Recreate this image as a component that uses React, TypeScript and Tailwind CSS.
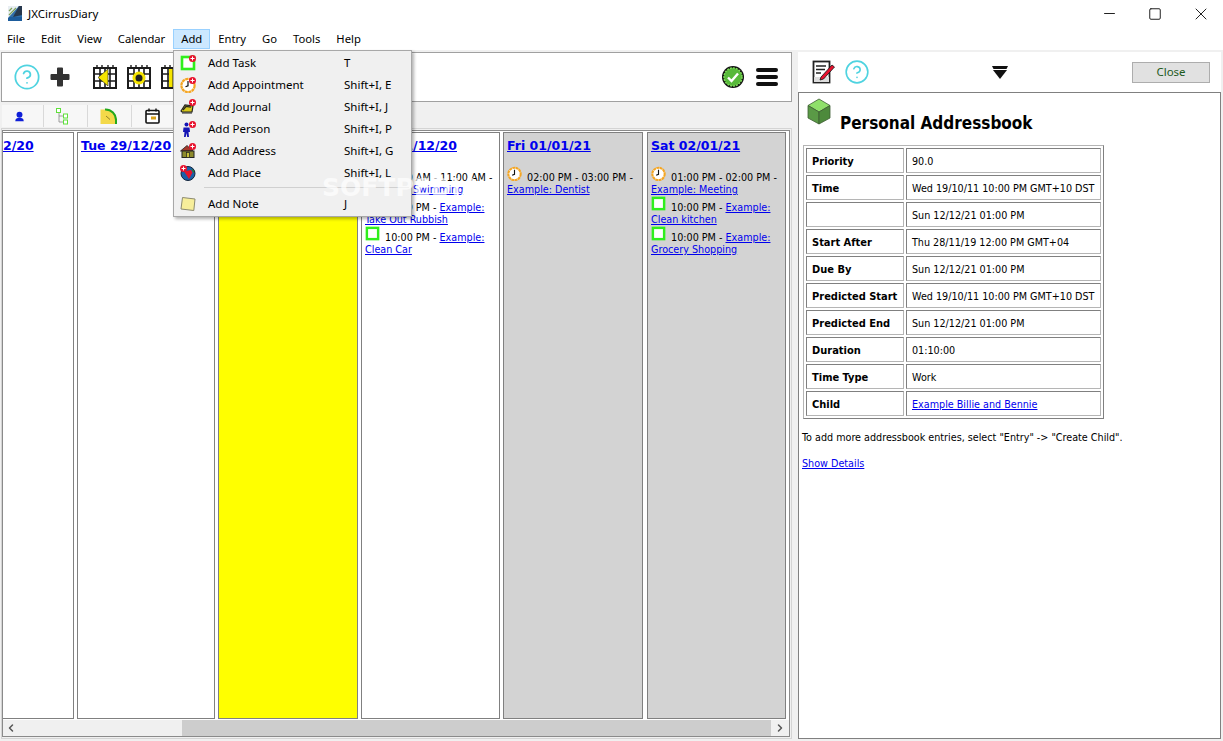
import { ChevronLeft, ChevronRight, CircleHelp, Minus, Square, X } from 'lucide-react';

const menus = ['File', 'Edit', 'View', 'Calendar', 'Add', 'Entry', 'Go', 'Tools', 'Help'];

const details = [
  ['Priority', '90.0'],
  ['Time', 'Wed 19/10/11 10:00 PM GMT+10 DST'],
  ['', 'Sun 12/12/21 01:00 PM'],
  ['Start After', 'Thu 28/11/19 12:00 PM GMT+04'],
  ['Due By', 'Sun 12/12/21 01:00 PM'],
  ['Predicted Start', 'Wed 19/10/11 10:00 PM GMT+10 DST'],
  ['Predicted End', 'Sun 12/12/21 01:00 PM'],
  ['Duration', '01:10:00'],
  ['Time Type', 'Work'],
];

function RedPlus() {
  return (
    <>
      <circle cx="12.5" cy="3.5" r="3.5" fill="#e8112d" />
      <path d="M12.5 1.5v4M10.5 3.5h4" stroke="#fff" strokeWidth="1" />
    </>
  );
}

function TaskIcon({ plus, size = 16 }: { plus?: boolean; size?: number }) {
  return (
    <svg width={size} height={size} viewBox="0 0 16 16" className="shrink-0">
      <rect x="2" y="2" width="12" height="12" fill="#fff" stroke="#2fef1c" strokeWidth="2.6" />
      {plus && <RedPlus />}
    </svg>
  );
}

function ClockIcon({ plus, size = 16 }: { plus?: boolean; size?: number }) {
  return (
    <svg width={size} height={size} viewBox="0 0 16 16" className="shrink-0">
      <circle cx="8" cy="8.5" r="6.6" fill="#fff" stroke="#f5a623" strokeWidth="2.2" strokeDasharray="3 0.5" />
      <path d="M8 4v4.800l-2.500 1" fill="none" stroke="#111" strokeWidth="1.2" />
      {plus && <RedPlus />}
    </svg>
  );
}

function JournalIcon() {
  return (
    <svg width="16" height="16" viewBox="0 0 16 16">
      <path d="M1 12 5 6l8 1-1 6H2z" fill="#d6c81c" stroke="#222" strokeWidth="1.2" />
      <path d="M3 11 6 7.500l5 .6M2 14h10" fill="none" stroke="#222" strokeWidth="1.2" />
      <RedPlus />
    </svg>
  );
}

function PersonIcon() {
  return (
    <svg width="16" height="16" viewBox="0 0 16 16">
      <circle cx="6.500" cy="3.500" r="2" fill="#1414b4" />
      <path d="M3.500 6.500h6L10 11H8.500l.5 5H7.200L6.500 12l-.8 4H4l.5-5H3z" fill="#1414b4" />
      <RedPlus />
    </svg>
  );
}

function AddressIcon() {
  return (
    <svg width="16" height="16" viewBox="0 0 16 16">
      <path d="M0.500 8 7 2.500 13 8z" fill="#a3392a" stroke="#222" strokeWidth="0.8" />
      <rect x="2" y="8" width="12" height="6.500" fill="#8d8a2c" stroke="#222" strokeWidth="1" />
      <rect x="6.500" y="9.500" width="3" height="5" fill="#c9c23a" stroke="#222" strokeWidth="0.7" />
      <RedPlus />
    </svg>
  );
}

function PlaceIcon() {
  return (
    <svg width="16" height="16" viewBox="0 0 16 16">
      <circle cx="8" cy="8.500" r="7" fill="#1b5fa8" stroke="#12233a" strokeWidth="1" />
      <path d="M4 6.500 11 5l1.500 2.500L9 14 6.500 10z" fill="#e5142a" />
      <path d="M11 3.500l3 2v3z" fill="#2a7d2a" />
      <circle cx="3.500" cy="3.500" r="3.500" fill="#e8112d" />
      <path d="M3.500 1.500v4M1.500 3.500h4" stroke="#fff" strokeWidth="1" />
    </svg>
  );
}

function NoteIcon() {
  return (
    <svg width="16" height="16" viewBox="0 0 16 16">
      <path d="M2.500 1.500 15 3l-1.200 11.500L1 13z" fill="#f7ee9a" stroke="#8c8a70" strokeWidth="1" />
    </svg>
  );
}

function CalendarIcon({ children }: { children: React.ReactNode }) {
  return (
    <svg width="24" height="24" viewBox="0 0 24 24" className="shrink-0">
      <rect x="1" y="3" width="22" height="20" fill="#fff" stroke="#1c1c1c" strokeWidth="2" />
      <path d="M1 9h22M1 16h22M7 3v20M12 3v20M17 3v20" stroke="#1c1c1c" strokeWidth="1.6" />
      <path d="M4 0v4M9 0v4M15 0v4M20 0v4" stroke="#1c1c1c" strokeWidth="1.4" />
      {children}
    </svg>
  );
}

function PlusIcon() {
  return (
    <svg width="22" height="22" viewBox="0 0 22 22">
      <path d="M8 2.500a1 1 0 0 1 1-1h4a1 1 0 0 1 1 1V8h5.500a1 1 0 0 1 1 1v4a1 1 0 0 1-1 1H14v5.500a1 1 0 0 1-1 1H9a1 1 0 0 1-1-1V14H2.500a1 1 0 0 1-1-1V9a1 1 0 0 1 1-1H8z" fill="#333" />
    </svg>
  );
}

function StatusIcon() {
  return (
    <svg width="24" height="24" viewBox="0 0 24 24">
      <circle cx="12" cy="12" r="11" fill="#111" />
      <circle cx="12" cy="12" r="9" fill="#57b93a" stroke="#7ddc57" strokeWidth="1.500" strokeDasharray="2 1" />
      <path d="m7 12.500 3.500 3.500L17 8.500" fill="none" stroke="#fff" strokeWidth="2.400" />
    </svg>
  );
}

function Hamburger() {
  return (
    <div className="flex flex-col gap-[3px] w-[22px]">
      <div className="h-[4px] rounded-sm bg-[#111]" />
      <div className="h-[4px] rounded-sm bg-[#111]" />
      <div className="h-[4px] rounded-sm bg-[#111]" />
    </div>
  );
}

function AppLogo() {
  return (
    <svg width="14" height="15" viewBox="0 0 14 15">
      <rect width="14" height="15" fill="#2f6ea8" />
      <rect y="11" width="14" height="4" fill="#1d5c9c" />
      <path d="M0 12 11 0H0z" fill="#e8eef2" />
      <path d="M1 9 8 2M1 5l3-3" stroke="#7fa15a" strokeWidth="1.200" />
      <path d="M11 0h3v9l-9 2z" fill="#27384d" />
    </svg>
  );
}

function EventLink({ children }: { children: React.ReactNode }) {
  return <a className="text-[#0000ee] underline">{children}</a>;
}

function Entry({ icon, time, title }: { icon: React.ReactNode; time: string; title: string }) {
  return (
    <div className="leading-[12px]">
      <span className="inline-block mr-[2px]">{icon}</span> {time} - <EventLink>{title}</EventLink>
    </div>
  );
}

function DayColumn({ date, className, children }: { date: string; className: string; children?: React.ReactNode }) {
  return (
    <div className={`shrink-0 h-full border border-[#808080] pl-[3px] pr-[2px] pt-[3px] font-['DejaVu_Sans_Condensed','DejaVu_Sans',sans-serif] text-[10.7px] text-black ${className}`}>
      <a className="block font-['DejaVu_Sans',sans-serif] font-bold text-[12.5px] leading-[19px] text-[#0000ee] underline whitespace-nowrap mb-[11px]">{date}</a>
      {children}
    </div>
  );
}

export default function App() {
  return (
    <div className="relative w-[1223px] h-[741px] overflow-hidden bg-[#f0f0f0] flex flex-col font-['Noto_Sans',sans-serif] text-[11.5px] text-black">
      <div className="h-[28px] shrink-0 bg-white flex items-center pl-[8px] pb-[1px]">
        <AppLogo />
        <span className="ml-[6px]">JXCirrusDiary</span>
        <div className="ml-auto flex items-center text-[#222]">
          <div className="w-[46px] flex justify-center"><Minus size={17} absoluteStrokeWidth strokeWidth={1} /></div>
          <div className="w-[46px] flex justify-center"><Square size={14} absoluteStrokeWidth strokeWidth={1} /></div>
          <div className="w-[46px] mr-[-1px] flex justify-center"><X size={20} absoluteStrokeWidth strokeWidth={1} /></div>
        </div>
      </div>

      <div className="h-[22px] shrink-0 bg-white flex py-[1px] text-[11.25px]">
        {menus.map((m) => (
          <div
            key={m}
            className={m === 'Add' ? 'px-[7px] flex items-center bg-[#cce8ff] border border-[#99d1ff]' : 'px-[7px] flex items-center border border-transparent first:pl-[6px]'}
          >
            {m}
          </div>
        ))}
      </div>

      <div className="flex-1 flex min-h-0 pt-[2px] pl-[1px] pb-[2px] pr-[2px]">
        <div className="w-[791px] shrink-0 flex flex-col">
          <div className="h-[50px] shrink-0 bg-white border border-[#a0a0a0] flex items-center pl-[11px] pr-[13px]">
            <CircleHelp size={28} strokeWidth={1.5} className="text-[#4fd3e0]" />
            <div className="ml-[8px]"><PlusIcon /></div>
            <div className="ml-[22px] flex gap-[10px]">
              <CalendarIcon><path d="M15 4v17L5 12.500z" fill="#f5e400" stroke="#222" strokeWidth="0.6" /></CalendarIcon>
              <CalendarIcon>
                <circle cx="12" cy="13" r="5" fill="#222" stroke="#f5e400" strokeWidth="3" />
              </CalendarIcon>
              <CalendarIcon><rect x="8" y="4" width="9" height="18" fill="#f5e400" /><path d="M12 4v18" stroke="#222" /></CalendarIcon>
            </div>
            <div className="ml-auto flex items-center gap-[11px]">
              <StatusIcon />
              <Hamburger />
            </div>
          </div>

          <div className="h-[22px] mt-[3px] shrink-0 flex">
            <div className="w-[42px] ml-[1px] pr-[7px] flex items-center justify-center bg-[#f7f7f7] border-r border-[#d9d9d9]">
              <svg width="11" height="11" viewBox="0 0 13 13"><circle cx="6.500" cy="4.500" r="3.500" fill="#0f1fd8" /><path d="M1.500 12c0-3 2-4 5-4s5 1 5 4z" fill="#0f1fd8" /></svg>
            </div>
            <div className="w-[44px] pr-[8px] flex items-center justify-center bg-[#f7f7f7] border-r border-[#d9d9d9]">
              <svg width="12" height="17" viewBox="0 0 12 17">
                <path d="M3 4v10h4M3 8h4" fill="none" stroke="#888" strokeWidth="0.8" />
                <rect x="0.500" y="0.500" width="4" height="4" fill="#fff" stroke="#5fe03a" />
                <rect x="7.500" y="6" width="4" height="4" fill="#fff" stroke="#5fe03a" />
                <rect x="7.500" y="12" width="4" height="4" fill="#fff" stroke="#5fe03a" />
              </svg>
            </div>
            <div className="w-[44px] pr-[2px] flex items-center justify-center bg-[#f7f7f7] border-r border-[#d9d9d9]">
              <svg width="17" height="17" viewBox="0 0 17 17">
                <path d="M0.500 1.500h5.500a10 10 0 0 1 10.500 10v4.500H0.500z" fill="#f3d94a" />
                <path d="M5 1.500a10.500 10.500 0 0 1 11 11v3.500" fill="none" stroke="#23a81e" strokeWidth="2" />
                <path d="M6 8 10 11.500" stroke="#7a6a20" strokeWidth="0.800" />
              </svg>
            </div>
            <div className="w-[43px] pr-[2px] flex items-center justify-center bg-[#f7f7f7]">
              <svg width="15" height="16" viewBox="0 0 15 16">
                <rect x="1" y="2.500" width="13" height="12.500" rx="1" fill="#fff" stroke="#111" strokeWidth="1.600" />
                <path d="M1 6h13M4 0.500v3M11 0.500v3" stroke="#111" strokeWidth="1.400" />
                <rect x="6" y="8.500" width="5" height="3" fill="#d9a21b" />
              </svg>
            </div>
          </div>

          <div className="flex-1 min-h-0 mt-[1px] border border-[#d4d4d4] pt-[1px] pr-[1px] pb-[1px]">
            <div className="h-full bg-white border border-[#8a8a8a] flex flex-col">
              <div className="flex-1 min-h-0 overflow-hidden flex gap-[3px] pt-[1px] mb-[1px]">
                <DayColumn date="Mon 28/12/20" className="ml-[-69px] w-[140px] bg-white" />
                <DayColumn date="Tue 29/12/20" className="w-[138px] bg-white" />
                <DayColumn date="Wed 30/12/20" className="w-[140px] bg-[#ffff00]" />
                <DayColumn date="Thu 31/12/20" className="w-[139px] bg-white">
                  <Entry icon={<ClockIcon size={15} />} time="10:00 AM - 11:00 AM" title="Example: Swimming" />
                  <Entry icon={<TaskIcon size={15} />} time="10:00 PM" title="Example: Take Out Rubbish" />
                  <Entry icon={<TaskIcon size={15} />} time="10:00 PM" title="Example: Clean Car" />
                </DayColumn>
                <DayColumn date="Fri 01/01/21" className="w-[140px] bg-[#d3d3d3]">
                  <Entry icon={<ClockIcon size={15} />} time="02:00 PM - 03:00 PM" title="Example: Dentist" />
                </DayColumn>
                <DayColumn date="Sat 02/01/21" className="w-[139px] ml-[1px] bg-[#d3d3d3]">
                  <Entry icon={<ClockIcon size={15} />} time="01:00 PM - 02:00 PM" title="Example: Meeting" />
                  <Entry icon={<TaskIcon size={15} />} time="10:00 PM" title="Example: Clean kitchen" />
                  <Entry icon={<TaskIcon size={15} />} time="10:00 PM" title="Example: Grocery Shopping" />
                </DayColumn>
              </div>
              <div className="h-[16px] shrink-0 flex items-stretch bg-[#f0f0f0]">
                <div className="w-[16px] flex items-center justify-center"><ChevronLeft size={12} strokeWidth={3} className="text-[#555]" /></div>
                <div className="w-[163px]" />
                <div className="w-[589px] bg-[#cdcdcd]" />
                <div className="flex-1 flex items-center justify-center"><ChevronRight size={12} strokeWidth={3} className="text-[#555]" /></div>
              </div>
            </div>
          </div>
        </div>

        <div className="flex-1 ml-[6px] flex flex-col min-w-0">
          <div className="h-[40px] shrink-0 bg-white flex items-center pl-[14px] pr-[11px]">
            <svg width="24" height="24" viewBox="0 0 24 24" className="shrink-0">
              <rect x="1.500" y="1.500" width="16" height="21" fill="#fff" stroke="#222" strokeWidth="1.800" />
              <path d="M4 6h10M4 9.500h9M4 13h5" stroke="#222" strokeWidth="1.300" />
              <rect x="2" y="17" width="15" height="5" fill="#ddd" />
              <path d="m9 17 11-12 2.500 2-11 12-3.500 1z" fill="#e8112d" stroke="#111" strokeWidth="0.800" />
            </svg>
            <CircleHelp size={26} strokeWidth={1.5} className="ml-[8px] text-[#4fd3e0]" />
            <svg width="16" height="13" viewBox="0 0 16 13" className="ml-[122px]">
              <path d="M0 0h16l-1.500 3h-13z" fill="#111" />
              <path d="M1 4h14l-7 9z" fill="#111" />
            </svg>
            <button className="ml-auto w-[78px] h-[21px] bg-[#e1e1e1] border border-[#adadad] text-[#1d5a1d] text-[11.5px]">Close</button>
          </div>

          <div className="flex-1 min-h-0 bg-white border border-[#808080] pl-[3px]">
            <div className="flex items-start h-[52px] text-black">
              <svg width="24" height="27" viewBox="0 0 24 27" className="mt-[5px] ml-[5px]">
                <path d="M12 1 23 7.500 12 14 1 7.500z" fill="#8fe06a" stroke="#3d5e32" strokeWidth="0.800" />
                <path d="M1 7.500 12 14v12L1 20z" fill="#5a9a46" stroke="#3d5e32" strokeWidth="0.800" />
                <path d="M23 7.500 12 14v12l11-6z" fill="#4d8a3c" stroke="#3d5e32" strokeWidth="0.800" />
              </svg>
              <h1 className="ml-[9px] mt-[19px] font-['DejaVu_Sans_Condensed','DejaVu_Sans',sans-serif] font-bold text-[17px] leading-[22px]">Personal Addressbook</h1>
            </div>
            <div className="font-['DejaVu_Sans_Condensed','DejaVu_Sans',sans-serif] text-[10.7px]">
              <table className="ml-[1px] border-separate border-spacing-[2px] border border-t-[#b5b5b5] border-l-[#b5b5b5] border-r-[#808080] border-b-[#808080]">
                <tbody>
                  {details.map(([label, value], i) => (
                    <tr key={i} className="h-[25px]">
                      <td className="w-[98px] px-[5px] pt-[3px] pb-0 text-[11px] font-bold whitespace-nowrap border border-t-[#808080] border-l-[#808080] border-r-[#b5b5b5] border-b-[#b5b5b5]">{label}</td>
                      <td className="w-[195px] px-[5px] pt-[3px] pb-0 whitespace-nowrap border border-t-[#808080] border-l-[#808080] border-r-[#b5b5b5] border-b-[#b5b5b5]">{value}</td>
                    </tr>
                  ))}
                  <tr className="h-[25px]">
                    <td className="px-[5px] pt-[3px] pb-0 text-[11px] font-bold border border-t-[#808080] border-l-[#808080] border-r-[#b5b5b5] border-b-[#b5b5b5]">Child</td>
                    <td className="px-[5px] pt-[3px] pb-0 border border-t-[#808080] border-l-[#808080] border-r-[#b5b5b5] border-b-[#b5b5b5]"><a className="text-[#0000ee] underline">Example Billie and Bennie</a></td>
                  </tr>
                </tbody>
              </table>
              <p className="mt-[11px] leading-[15px]">To add more addressbook entries, select "Entry" -&gt; "Create Child".</p>
              <p className="mt-[11px] leading-[15px]"><a className="text-[#0000ee] underline">Show Details</a></p>
            </div>
          </div>
        </div>
      </div>

      <div className="absolute left-[173px] top-[50px] w-[239px] h-[167px] bg-[#f0f0f0] border border-[#a8a8a8] shadow-[2px_2px_3px_rgba(0,0,0,0.3)] pt-[1px]">
        {[
          [<TaskIcon plus />, 'Add Task', 'T'],
          [<ClockIcon plus />, 'Add Appointment', 'Shift+I, E'],
          [<JournalIcon />, 'Add Journal', 'Shift+I, J'],
          [<PersonIcon />, 'Add Person', 'Shift+I, P'],
          [<AddressIcon />, 'Add Address', 'Shift+I, G'],
          [<PlaceIcon />, 'Add Place', 'Shift+I, L'],
        ].map(([icon, label, key], i) => (
          <div key={i} className="h-[22px] flex items-center pl-[6px]">
            <div className="w-[16px] h-[16px] -mt-[1px]">{icon}</div>
            <span className="ml-[12px] w-[136px]">{label}</span>
            <span>{key}</span>
          </div>
        ))}
        <div className="h-px ml-[30px] mr-[2px] mt-[3px] mb-[5px] bg-[#d0d0d0]" />
        <div className="h-[22px] flex items-center pl-[6px]">
          <div className="w-[16px] h-[16px] -mt-[1px]"><NoteIcon /></div>
          <span className="ml-[12px] w-[136px]">Add Note</span>
          <span>J</span>
        </div>
      </div>

      <div className="absolute left-[322px] top-[173px] font-['DejaVu_Sans',sans-serif] font-bold text-[25px] leading-[30px] text-white/70 pointer-events-none">SOFTPEDIA</div>
    </div>
  );
}
